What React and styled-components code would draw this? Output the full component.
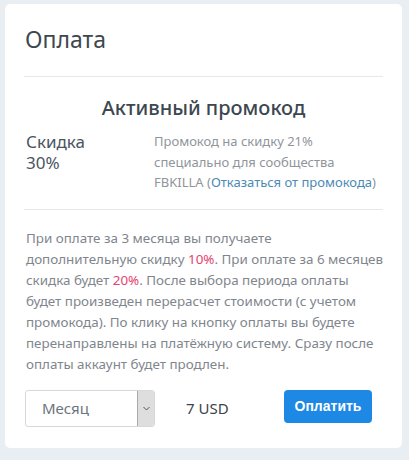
import React from "react"
import styled, { createGlobalStyle } from "styled-components"

const GlobalStyle = createGlobalStyle`
  html, body {
    margin: 0;
    padding: 0;
    background: #e9eef3;
  }
  body {
    font-family: "Noto Sans", "Open Sans", sans-serif;
    color: #4a5560;
  }
`

const Page = styled.div`
  padding: 4px 7px 13px 5px;
`

const Card = styled.div`
  background: #fff;
  border-radius: 5px;
  padding: 18px 19px 21px 19px;
`

const Title = styled.h2`
  margin: 0 0 0 1px;
  font-size: 23px;
  font-weight: 400;
  line-height: 34px;
  color: #3d4750;
`

const Divider = styled.hr`
  border: 0;
  border-top: 1px solid #e6e9ec;
  margin: ${p => p.$top}px 0 ${p => p.$bottom}px;
`

const PromoHeading = styled.h3`
  margin: 0;
  text-align: center;
  font-size: 20px;
  font-weight: 500;
  line-height: 28px;
  color: #3d4750;
`

const PromoRow = styled.div`
  display: grid;
  grid-template-columns: 130px 1fr;
  margin-top: 9px;
`

const Discount = styled.div`
  padding-left: 2px;
  font-size: 17px;
  line-height: 21px;
  color: #4a5560;
`

const PromoText = styled.div`
  font-size: 13px;
  line-height: 20.5px;
  color: #8f959b;
`

const Link = styled.a`
  color: #4a8ab5;
  text-decoration: none;
`

const Info = styled.p`
  margin: 0 0 0 2px;
  font-size: 13.4px;
  white-space: nowrap;
  line-height: 21px;
  color: #7f868d;
`

const Accent = styled.span`
  color: #e5436f;
`

const Footer = styled.div`
  display: flex;
  align-items: center;
  margin-top: 15px;
  padding-left: 1px;
`

const Select = styled.div`
  display: flex;
  width: 130px;
  height: 37px;
  box-sizing: border-box;
  border: 1px solid #d6d9dc;
  border-radius: 3px;
  overflow: hidden;
`

const SelectValue = styled.div`
  flex: 1;
  display: flex;
  align-items: center;
  padding-left: 16px;
  font-size: 15px;
  color: #6d747b;
`

const SelectArrow = styled.div`
  width: 16px;
  display: flex;
  align-items: center;
  justify-content: center;
  background: #dedede;
  border-left: 1px solid #a9a9a9;
`

const Price = styled.div`
  margin-left: 31px;
  font-size: 15px;
  color: #3b444d;
`

const PayButton = styled.button`
  margin-left: auto;
  margin-right: 11px;
  margin-top: -4px;
  width: 88px;
  height: 33px;
  border: 0;
  border-radius: 4px;
  background: #1e88e5;
  color: #fff;
  font-family: "Liberation Sans", Arial, sans-serif;
  font-weight: 700;
  font-size: 14px;
  cursor: pointer;
`

const App = () => (
  <>
    <GlobalStyle />
    <Page>
      <Card>
        <Title>Оплата</Title>
        <Divider $top={20} $bottom={17} />
        <PromoHeading>Активный промокод</PromoHeading>
        <PromoRow>
          <Discount>
            Скидка
            <br />
            30%
          </Discount>
          <PromoText>
            Промокод на скидку 21% специально для сообщества FBKILLA (
            <Link href="#">Отказаться от промокода</Link>)
          </PromoText>
        </PromoRow>
        <Divider $top={16} $bottom={18} />
        <Info>
          При оплате за 3 месяца вы получаете
          <br />
          дополнительную скидку <Accent>10%</Accent>. При оплате за 6 месяцев
          <br />
          скидка будет <Accent>20%</Accent>. После выбора периода оплаты
          <br />
          будет произведен перерасчет стоимости (с учетом
          <br />
          промокода). По клику на кнопку оплаты вы будете
          <br />
          перенаправлены на платёжную систему. Сразу после
          <br />
          оплаты аккаунт будет продлен.
        </Info>
        <Footer>
          <Select>
            <SelectValue>Месяц</SelectValue>
            <SelectArrow>
              <svg width="7" height="5" viewBox="0 0 7 5">
                <path d="M0.5 1 L3.5 4 L6.5 1" fill="none" stroke="#555" strokeWidth="1" />
              </svg>
            </SelectArrow>
          </Select>
          <Price>7 USD</Price>
          <PayButton>Оплатить</PayButton>
        </Footer>
      </Card>
    </Page>
  </>
)

export default App
